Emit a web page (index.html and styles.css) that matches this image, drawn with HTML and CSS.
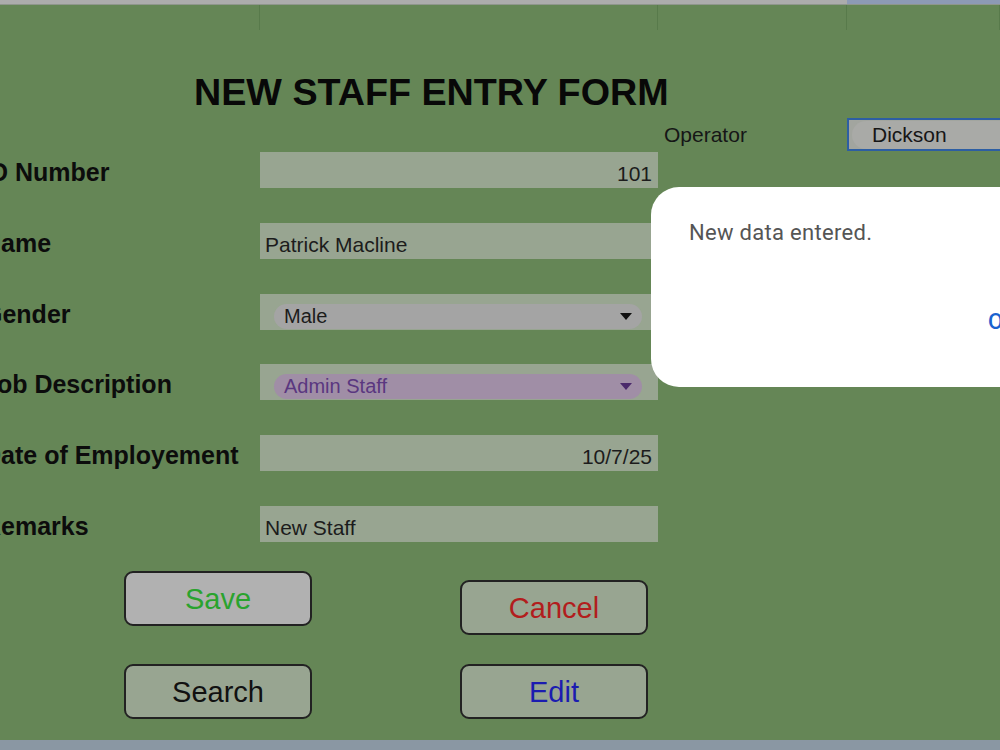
FILE: index.html
```html
<!DOCTYPE html>
<html lang="en">
<head>
  <meta charset="UTF-8">
  <meta name="viewport" content="width=device-width, initial-scale=1.0">
  <title>New Staff Entry Form</title>
  <link rel="stylesheet" href="styles.css">
</head>
<body>

  <div class="colheads">
    <div class="colhead"></div>
    <div class="colhead selected"></div>
  </div>

  <div class="sheet">
    <div class="gridlines">
      <div></div>
      <div></div>
      <div></div>
      <div></div>
    </div>

    <h1 class="title">NEW STAFF ENTRY FORM</h1>

    <div class="oprow">
      <div class="op-label">Operator</div>
      <div class="op-cell"><span class="op-chip">Dickson</span></div>
    </div>

    <div class="form">
      <div class="label">ID Number</div>
      <div class="field right">101</div>

      <div class="label">Name</div>
      <div class="field">Patrick Macline</div>

      <div class="label">Gender</div>
      <div class="field">
        <div class="chip">
          <span>Male</span>
          <svg width="12" height="7" viewBox="0 0 12 7"><path d="M0 0h12L6 7z" fill="#111"/></svg>
        </div>
      </div>

      <div class="label">Job Description</div>
      <div class="field">
        <div class="chip purple">
          <span>Admin Staff</span>
          <svg width="12" height="7" viewBox="0 0 12 7"><path d="M0 0h12L6 7z" fill="#4b2a6b"/></svg>
        </div>
      </div>

      <div class="label">Date of Employement</div>
      <div class="field right">10/7/25</div>

      <div class="label">Remarks</div>
      <div class="field">New Staff</div>
    </div>

    <div class="buttons">
      <div class="btn-col">
        <button class="btn save">Save</button>
        <button class="btn search">Search</button>
      </div>
      <div class="btn-col second">
        <button class="btn cancel">Cancel</button>
        <button class="btn edit">Edit</button>
      </div>
    </div>

    <div class="dialog">
      <p class="dialog-text">New data entered.</p>
      <div class="dialog-actions">
        <button class="ok">OK</button>
      </div>
    </div>
  </div>

  <div class="footer"></div>

</body>
</html>
```

FILE: styles.css
```css
body {
  margin: 0;
  width: 1000px;
  height: 750px;
  overflow: hidden;
  display: flex;
  flex-direction: column;
  font-family: 'Liberation Sans', Arial, sans-serif;
  color: #1c1c1c;
  background-color: #658656;
}

.colheads {
  height: 5px;
  display: grid;
  grid-template-columns: 847px 1fr;
}

.colhead {
  background-color: #acacac;
  border-bottom: 1px solid #8f968c;
}

.colhead.selected {
  background-color: #8d9ab5;
}

.sheet {
  position: relative;
  flex: 1;
  background-color: #658656;
}

.gridlines {
  height: 25px;
  display: grid;
  grid-template-columns: 260px 398px 189px 1fr;
}

.gridlines div {
  border-right: 1px solid #587a4b;
}

.title {
  margin: 41px 0 5px 0;
  padding-left: 194px;
  font-size: 37.7px;
  line-height: 42px;
  font-weight: bold;
  color: #080808;
}

.oprow {
  height: 33px;
  margin-bottom: 1px;
  display: grid;
  grid-template-columns: 658px 189px 1fr;
}

.op-label {
  grid-column: 2;
  padding-left: 6px;
  font-size: 21px;
  line-height: 33px;
  color: #161616;
}

.op-cell {
  border: 2px solid #2d5ea3;
  border-right: none;
  background-color: #a2a59f;
  display: flex;
  align-items: center;
  padding-left: 3px;
}

.op-chip {
  background-color: #a9aaa7;
  border-radius: 14px 0 0 14px;
  padding: 2px 0 2px 20px;
  flex: 1;
  font-size: 21px;
  color: #161616;
}

.form {
  margin-left: -17px;
  display: grid;
  grid-template-columns: 277px 398px;
  grid-auto-rows: 36px;
  row-gap: 34.8px;
}

.label {
  font-size: 25px;
  font-weight: bold;
  line-height: 36px;
  padding-top: 2px;
  color: #0c0c0c;
  white-space: nowrap;
}

.field {
  background-color: #98a591;
  font-size: 21px;
  line-height: 36px;
  padding: 4px 6px 0 5px;
  box-sizing: border-box;
}

.field:has(.chip) {
  padding-top: 0;
}

.field.right {
  text-align: right;
}

.chip {
  margin: 10px 10px 0 9px;
  height: 25px;
  border-radius: 13px;
  background-color: #a4a4a4;
  display: flex;
  align-items: center;
  justify-content: space-between;
  padding: 0 10px 0 10px;
  font-size: 20px;
  line-height: 25px;
}

.chip.purple {
  background-color: #a08ea6;
  color: #5a3780;
}

.buttons {
  margin-top: 29px;
  padding-left: 124px;
  display: flex;
  gap: 148px;
}

.btn-col {
  display: flex;
  flex-direction: column;
  gap: 38px;
}

.btn-col.second {
  margin-top: 9px;
  gap: 29px;
}

.btn {
  width: 188px;
  height: 55px;
  padding-top: 4px;
  border: 2px solid #222;
  border-radius: 9px;
  background-color: #98a591;
  font-family: 'Liberation Sans', Arial, sans-serif;
  font-size: 29px;
  cursor: pointer;
}

.save {
  background-color: #b1b1b1;
  color: #2aa32e;
}

.search {
  color: #111;
}

.cancel {
  color: #b21d1d;
}

.edit {
  color: #1b1cb0;
}

.dialog {
  position: absolute;
  left: 651px;
  top: 182px;
  width: 420px;
  height: 200px;
  background-color: #fff;
  border-radius: 28px;
  font-family: Roboto, 'Noto Sans', sans-serif;
}

.dialog-text {
  margin: 0;
  padding: 33px 0 0 38px;
  font-size: 22px;
  letter-spacing: 0.3px;
  color: #555;
}

.dialog-actions {
  margin-top: 64px;
  padding-left: 329px;
}

.ok {
  border: none;
  background: none;
  padding: 0 8px;
  font-family: Roboto, 'Noto Sans', sans-serif;
  font-size: 22px;
  font-weight: 500;
  color: #1a62cf;
}

.footer {
  height: 10px;
  background-color: #8a97a3;
}
```
